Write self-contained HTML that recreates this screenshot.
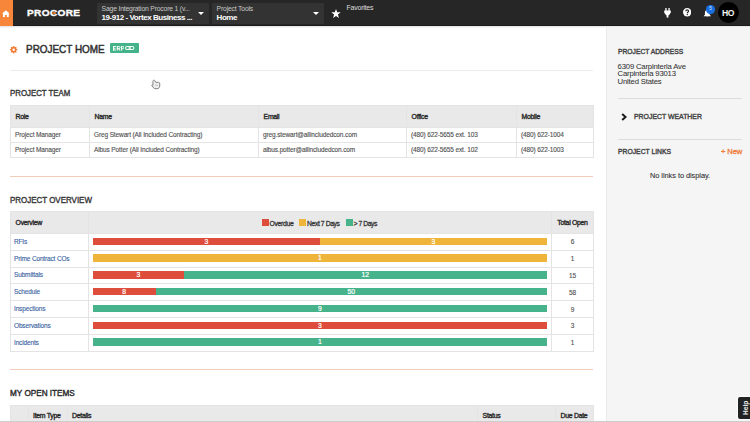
<!DOCTYPE html>
<html><head><meta charset="utf-8">
<style>
*{box-sizing:border-box;margin:0;padding:0}
html,body{width:750px;height:422px;overflow:hidden;background:#fff;font-family:"Liberation Sans",sans-serif;color:#333}
.a{position:absolute;white-space:nowrap}
#hdr{position:absolute;left:0;top:0;width:750px;height:25.6px;background:#262626;border-bottom:1.5px solid #1c1c1c}
#shadow{position:absolute;left:0;top:25.6px;width:750px;height:2px;background:linear-gradient(#e2e2e2,#fafafa)}
#home{position:absolute;left:0;top:0;width:13.4px;height:25.6px;background:#f7863a}
.sel{position:absolute;top:2.8px;height:21px;background:#333;border-radius:1px;overflow:hidden}
.sel .l1{position:absolute;left:4.6px;top:2px;font-size:6.8px;line-height:8px;color:#c8c8c8;letter-spacing:-0.18px}
.sel .l2{position:absolute;left:4.6px;top:10.3px;font-size:8px;line-height:10px;color:#fff;font-weight:700;letter-spacing:-0.45px}
.caret{position:absolute;top:9.6px;width:0;height:0;border-left:3px solid transparent;border-right:3px solid transparent;border-top:3px solid #fff}
#sidebar{position:absolute;left:605.5px;top:28px;width:144.3px;height:394px;background:#f5f5f5;border-left:1px solid #eaeaea}
.h{position:absolute;white-space:nowrap;font-weight:400;color:#333;-webkit-text-stroke:0.4px currentColor}
.line{position:absolute;height:1px;background:#e6e6e6}
.oline{position:absolute;height:1px;background:#f1cdb9}
table{border-collapse:collapse;position:absolute;table-layout:fixed}
td,th{border:1px solid #e4e4e4;white-space:nowrap;overflow:hidden;text-align:left;padding:0 0 0 5px}
th{background:#e9e9e9;font-weight:400;font-size:6.9px;color:#2a2a2a;letter-spacing:-0.3px;padding-left:4.6px;-webkit-text-stroke:0.36px #2a2a2a}
td{font-size:6.5px;color:#505050;letter-spacing:-0.12px;padding-left:4px;-webkit-text-stroke:0.12px currentColor}
.bar{position:absolute;height:8px;left:0}
.bars{position:absolute;left:93px;width:454px;height:7.6px}
.seg{position:absolute;top:0;height:7.6px;color:#fff;font-size:6.8px;line-height:8.2px;text-align:center;-webkit-text-stroke:0.2px #fff}
.r{background:#de4c3b}.y{background:#efb43a}.g{background:#46b38a}
.tr2 td,.tr2 th{padding-bottom:2px}
.lnk{color:#3a5f9f;letter-spacing:-0.15px;padding-left:3px;padding-bottom:1px}
</style></head><body>
<div id="hdr"></div>
<div id="shadow"></div>
<div id="home"></div>
<svg class="a" style="left:1.6px;top:9.7px" width="7.8" height="7.2" viewBox="0 0 8 7"><path d="M4 0 L8 3.6 L7 3.6 L7 7 L5 7 L5 5 L3 5 L3 7 L1 7 L1 3.6 L0 3.6 Z" fill="#fff"/></svg>
<div class="a" style="left:26.6px;top:6.9px;font-size:9.2px;line-height:12px;font-weight:700;color:#fff;letter-spacing:0.3px;transform:scaleX(1.1);transform-origin:0 0;-webkit-text-stroke:0.35px #fff">PROCORE</div><div class="a" style="left:53.3px;top:11.7px;width:2.8px;height:2.8px;border-radius:50%;background:#f47d30"></div>

<div class="sel" style="left:97px;width:112px"><div class="l1">Sage Integration Procore 1 (v...</div><div class="l2">19-912 - Vortex Business ...</div><div class="caret" style="left:101px"></div></div>
<div class="sel" style="left:212px;width:112px"><div class="l1">Project Tools</div><div class="l2">Home</div><div class="caret" style="left:101px"></div></div>
<svg class="a" style="left:331px;top:8.5px" width="10" height="9" viewBox="0 0 24 23"><path d="M12 0 L15 8.2 L24 8.6 L17 14.2 L19.4 23 L12 18 L4.6 23 L7 14.2 L0 8.6 L9 8.2 Z" fill="#fff"/></svg>
<div class="a" style="left:346.6px;top:3.2px;font-size:7px;line-height:9px;color:#ddd;letter-spacing:-0.25px">Favorites</div>

<svg class="a" style="left:664.4px;top:8px" width="7" height="9.6" viewBox="0 0 7 9.6"><rect x="1.3" y="0" width="1.3" height="3" fill="#fff"/><rect x="4.4" y="0" width="1.3" height="3" fill="#fff"/><path d="M0.2 2.6 H6.8 V4.6 L5 7.2 H2 L0.2 4.6 Z" fill="#fff"/><rect x="2.6" y="6.8" width="1.8" height="2.8" fill="#fff"/></svg>
<svg class="a" style="left:682.7px;top:8.4px" width="8.4" height="8.4" viewBox="0 0 18 18"><circle cx="9" cy="9" r="9" fill="#fff"/><path d="M6 6.9 Q6 3.9 9 3.9 Q12 3.9 12 6.6 Q12 8.1 10.2 9.1 Q9.2 9.7 9.2 11" stroke="#252525" stroke-width="2.4" fill="none"/><circle cx="9.2" cy="13.9" r="1.4" fill="#252525"/></svg>
<svg class="a" style="left:703.3px;top:9.6px" width="8.6" height="7.6" viewBox="0 0 18 16"><path d="M9 0 Q14 0 14 6 L14 10 L17 13 L1 13 L4 10 L4 6 Q4 0 9 0 Z M7 14 H11 Q11 16 9 16 Q7 16 7 14Z" fill="#fff"/></svg>
<div class="a" style="left:706.4px;top:5.2px;width:8.4px;height:8.4px;border-radius:50%;background:#1a6fe0;color:#dfe9fb;font-size:4.6px;line-height:8.4px;text-align:center;font-weight:400">5</div>
<div class="a" style="left:717.8px;top:2.4px;width:20.8px;height:20.8px;border-radius:50%;background:#000;color:#f2f2f2;font-size:8.6px;line-height:22.6px;text-align:center;font-weight:700;letter-spacing:-0.45px;text-indent:-0.4px">HO</div>

<!-- sidebar -->
<div id="sidebar"></div>
<div class="h" style="left:618px;top:46.5px;font-size:7.5px;line-height:10px;transform:scaleX(0.897);transform-origin:0 0;color:#444">PROJECT ADDRESS</div>
<div class="a" style="left:617.6px;top:62.6px;font-size:7.7px;line-height:7.45px;color:#333;letter-spacing:-0.17px;-webkit-text-stroke:0.05px #333">6309 Carpinteria Ave<br>Carpinteria 93013<br>United States</div>
<div class="line" style="left:618px;top:98px;width:124px;background:#dcdcdc"></div>
<svg class="a" style="left:620.5px;top:113px" width="6" height="8" viewBox="0 0 6 8"><path d="M1.2 0.9 L4.6 4 L1.2 7.1" stroke="#1a1a1a" stroke-width="2" fill="none"/></svg>
<div class="h" style="left:634px;top:112px;font-size:7.5px;line-height:10px;transform:scaleX(0.919);transform-origin:0 0;color:#444">PROJECT WEATHER</div>
<div class="line" style="left:618px;top:139px;width:124px;background:#dcdcdc"></div>
<div class="h" style="left:618px;top:147px;font-size:7.5px;line-height:10px;transform:scaleX(0.905);transform-origin:0 0;color:#444">PROJECT LINKS</div>
<div class="a" style="left:721px;top:146.8px;font-size:7.6px;line-height:10px;color:#f07a36;font-weight:400;-webkit-text-stroke:0.3px #f07a36;letter-spacing:-0.1px">+ New</div>
<div class="a" style="left:650px;top:171px;font-size:7.4px;line-height:10px;color:#333;letter-spacing:-0.05px;-webkit-text-stroke:0.1px #333">No links to display.</div>

<!-- main -->
<svg class="a" style="left:8.6px;top:44.6px" width="9.4" height="9.4" viewBox="0 0 20 20"><path fill-rule="evenodd" fill="#f27b35" d="M8.67 3.94 L8.97 2.07 L11.03 2.07 L11.33 3.94 L13.34 4.78 L14.88 3.66 L16.34 5.12 L15.22 6.66 L16.06 8.67 L17.93 8.97 L17.93 11.03 L16.06 11.33 L15.22 13.34 L16.34 14.88 L14.88 16.34 L13.34 15.22 L11.33 16.06 L11.03 17.93 L8.97 17.93 L8.67 16.06 L6.66 15.22 L5.12 16.34 L3.66 14.88 L4.78 13.34 L3.94 11.33 L2.07 11.03 L2.07 8.97 L3.94 8.67 L4.78 6.66 L3.66 5.12 L5.12 3.66 L6.66 4.78Z M10 7.4 A2.6 2.6 0 1 0 10 12.6 A2.6 2.6 0 1 0 10 7.4Z"/></svg>
<div class="h" style="left:25.7px;top:42.4px;font-size:10.8px;line-height:14px;transform:scaleX(0.92);transform-origin:0 0;color:#333;-webkit-text-stroke:0.5px #333">PROJECT HOME</div>
<div class="a" style="left:109.7px;top:43.2px;width:29.4px;height:9.9px;background:#45b38a;border-radius:1px"></div>
<svg class="a" style="left:113px;top:46.2px" width="11" height="4.5" viewBox="0 0 44 18" fill="#f6fcf9"><rect x="0" y="0" width="4.4" height="18"/><rect x="0" y="0" width="11.5" height="3.8"/><rect x="0" y="7.2" width="10" height="3.6"/><rect x="0" y="14.2" width="11.8" height="3.8"/><rect x="15" y="0" width="4.4" height="18"/><path d="M16 2 H23 Q28.4 2 28.4 6 Q28.4 10 23 10 H16" stroke="#f6fcf9" stroke-width="4" fill="none"/><path d="M22 9.5 L28.6 18" stroke="#f6fcf9" stroke-width="4.4" fill="none"/><rect x="32" y="0" width="4.4" height="18"/><path d="M33 2 H38.6 Q43.4 2 43.4 6.3 Q43.4 10.6 38.6 10.6 H33" stroke="#f6fcf9" stroke-width="4" fill="none"/></svg>
<svg class="a" style="left:125.4px;top:46.4px" width="9.4" height="4" viewBox="0 0 19 8"><rect x="1.1" y="1.1" width="9.6" height="5.8" rx="2.9" stroke="#f6fcf9" stroke-width="2.2" fill="none"/><rect x="8.3" y="1.1" width="9.6" height="5.8" rx="2.9" stroke="#f6fcf9" stroke-width="2.2" fill="none"/></svg>
<div class="line" style="left:10px;top:70px;width:583px;background:#ececec"></div>

<svg class="a" style="left:150px;top:79px" width="12" height="12" viewBox="0 0 12 12"><path d="M3.6 1.2 Q4.4 0.9 4.9 1.8 L5.8 3.4 L8.6 3.3 Q9.9 3.6 9.8 5 L9.6 8.2 Q8.5 9.9 6 9.8 L4.2 9.4 L1.8 6.6 Q1.5 5.9 2.4 6 L3 6.2 L2.9 2.2 Q3 1.4 3.6 1.2Z" stroke="#707070" stroke-width="0.85" fill="#f0f0f0"/><ellipse cx="6.6" cy="6.2" rx="1.6" ry="1" fill="#d0d0d0"/></svg>

<div class="h" style="left:10px;top:88.3px;font-size:8.8px;line-height:11px;transform:scaleX(0.892);transform-origin:0 0;color:#383838">PROJECT TEAM</div>
<table style="left:10px;top:105px;width:583px">
<colgroup><col style="width:79px"><col style="width:169px"><col style="width:148px"><col style="width:110px"><col style="width:77px"></colgroup>
<tr style="height:22px"><th>Role</th><th>Name</th><th>Email</th><th>Office</th><th>Mobile</th></tr>
<tr style="height:15px" class="tr2"><td>Project Manager</td><td>Greg Stewart (All Included Contracting)</td><td>greg.stewart@allincludedcon.com</td><td>(480) 622-5655 ext. 103</td><td>(480) 622-1004</td></tr>
<tr style="height:15px" class="tr2"><td>Project Manager</td><td>Albus Potter (All Included Contracting)</td><td>albus.potter@allincludedcon.com</td><td>(480) 622-5655 ext. 102</td><td>(480) 622-1003</td></tr>
</table>
<div class="oline" style="left:10px;top:176px;width:583px"></div>

<div class="h" style="left:10px;top:194.5px;font-size:8.8px;line-height:11px;transform:scaleX(0.904);transform-origin:0 0;color:#383838">PROJECT OVERVIEW</div>
<table id="ov" style="left:10px;top:211px;width:583px">
<colgroup><col style="width:77.8px"><col style="width:463.2px"><col style="width:42px"></colgroup>
<tr style="height:22px"><th>Overview</th><th></th><th style="text-align:center;padding:0">Total Open</th></tr>
<tr style="height:16.8px"><td class="lnk">RFIs</td><td></td><td style="text-align:center;padding:0">6</td></tr>
<tr style="height:16.8px"><td class="lnk">Prime Contract COs</td><td></td><td style="text-align:center;padding:0">1</td></tr>
<tr style="height:16.8px"><td class="lnk">Submittals</td><td></td><td style="text-align:center;padding:0">15</td></tr>
<tr style="height:16.8px"><td class="lnk">Schedule</td><td></td><td style="text-align:center;padding:0">58</td></tr>
<tr style="height:16.8px"><td class="lnk">Inspections</td><td></td><td style="text-align:center;padding:0">9</td></tr>
<tr style="height:16.8px"><td class="lnk">Observations</td><td></td><td style="text-align:center;padding:0">3</td></tr>
<tr style="height:16.8px"><td class="lnk">Incidents</td><td></td><td style="text-align:center;padding:0">1</td></tr>
</table>
<!-- legend -->
<div class="a r" style="left:262px;top:219px;width:7px;height:7px"></div>
<div class="a" style="left:269.5px;top:219px;font-size:6.8px;line-height:9px;font-weight:400;color:#333;-webkit-text-stroke:0.28px #333;letter-spacing:-0.3px">Overdue</div>
<div class="a y" style="left:299px;top:219px;width:7px;height:7px"></div>
<div class="a" style="left:307px;top:219px;font-size:6.8px;line-height:9px;font-weight:400;color:#333;-webkit-text-stroke:0.28px #333;letter-spacing:-0.4px">Next 7 Days</div>
<div class="a g" style="left:345.5px;top:219px;width:7px;height:7px"></div>
<div class="a" style="left:353.5px;top:219px;font-size:6.8px;line-height:9px;font-weight:400;color:#333;-webkit-text-stroke:0.28px #333;letter-spacing:-0.45px">&gt; 7 Days</div>

<div class="bars" style="top:237.5px"><div class="seg r" style="left:0;width:227px">3</div><div class="seg y" style="left:227px;width:227px">3</div></div>
<div class="bars" style="top:254.3px"><div class="seg y" style="left:0;width:454px">1</div></div>
<div class="bars" style="top:271.1px"><div class="seg r" style="left:0;width:90.6px">3</div><div class="seg g" style="left:90.6px;width:363.4px">12</div></div>
<div class="bars" style="top:287.9px"><div class="seg r" style="left:0;width:62.5px">8</div><div class="seg g" style="left:62.5px;width:391.5px">50</div></div>
<div class="bars" style="top:304.7px"><div class="seg g" style="left:0;width:454px">9</div></div>
<div class="bars" style="top:321.5px"><div class="seg r" style="left:0;width:454px">3</div></div>
<div class="bars" style="top:338.3px"><div class="seg g" style="left:0;width:454px">1</div></div>

<div class="oline" style="left:10px;top:369.2px;width:583px"></div>
<div class="h" style="left:10px;top:387.5px;font-size:8.8px;line-height:11px;transform:scaleX(0.929);transform-origin:0 0;color:#2a2a2a">MY OPEN ITEMS</div>
<table style="left:10px;top:404.5px;width:583px">
<colgroup><col style="width:17.5px"><col style="width:39px"><col style="width:410.5px"><col style="width:78px"><col style="width:38px"></colgroup>
<tr style="height:22px" class="tr2"><th></th><th>Item Type</th><th>Details</th><th>Status</th><th>Due Date</th></tr>
</table>
<div class="a" style="left:0;top:421px;width:750px;height:1px;background:#cdcdcd"></div>
<div class="a" style="left:738.3px;top:397.3px;width:12px;height:22px;background:#222;border-radius:2px 0 0 2px;box-shadow:0 0 0 0.8px #fff"></div>
<div class="a" style="left:740.8px;top:404.4px;font-size:6.6px;line-height:9px;color:#eee;font-weight:700;transform:rotate(-90deg);transform-origin:center;width:11px;height:11px;text-align:center"><span style="display:inline-block">Help</span></div>
</body></html>
